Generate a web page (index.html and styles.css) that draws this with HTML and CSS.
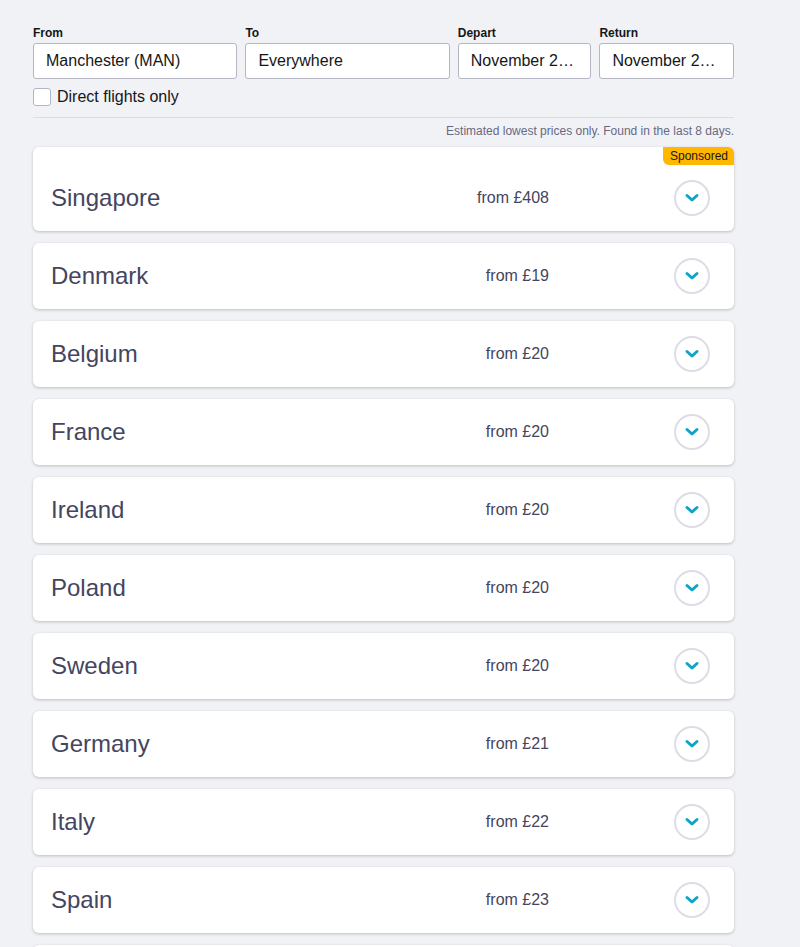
FILE: index.html
```html
<!DOCTYPE html>
<html lang="en">
<head>
<meta charset="utf-8">
<title>Everywhere</title>
<link rel="stylesheet" href="styles.css">
</head>
<body>
<div class="page">
  <form class="search">
    <div class="fields">
      <div class="field f-from"><label class="lbl">From</label><div class="input">Manchester (MAN)</div></div>
      <div class="field f-to"><label class="lbl">To</label><div class="input">Everywhere</div></div>
      <div class="field f-date"><label class="lbl">Depart</label><div class="input">November 2…</div></div>
      <div class="field f-date"><label class="lbl">Return</label><div class="input">November 2…</div></div>
    </div>
    <label class="direct"><span class="box"></span>Direct flights only</label>
  </form>
  <div class="divider"></div>
  <p class="note">Estimated lowest prices only. Found in the last 8 days.</p>
  <ul class="results">
    <li class="card sponsored">
      <div class="badge-row"><span class="badge">Sponsored</span></div>
      <div class="row"><span class="name">Singapore</span><span class="price">from £408</span><span class="chev"><svg viewBox="0 0 16 16" width="16" height="16"><path d="M3 5.5l5 4.5 5-4.5" fill="none" stroke="#0ca5c8" stroke-width="3" stroke-linecap="round" stroke-linejoin="round"/></svg></span></div>
    </li>
    <li class="card"><div class="row"><span class="name">Denmark</span><span class="price">from £19</span><span class="chev"><svg viewBox="0 0 16 16" width="16" height="16"><path d="M3 5.5l5 4.5 5-4.5" fill="none" stroke="#0ca5c8" stroke-width="3" stroke-linecap="round" stroke-linejoin="round"/></svg></span></div></li>
    <li class="card"><div class="row"><span class="name">Belgium</span><span class="price">from £20</span><span class="chev"><svg viewBox="0 0 16 16" width="16" height="16"><path d="M3 5.5l5 4.5 5-4.5" fill="none" stroke="#0ca5c8" stroke-width="3" stroke-linecap="round" stroke-linejoin="round"/></svg></span></div></li>
    <li class="card"><div class="row"><span class="name">France</span><span class="price">from £20</span><span class="chev"><svg viewBox="0 0 16 16" width="16" height="16"><path d="M3 5.5l5 4.5 5-4.5" fill="none" stroke="#0ca5c8" stroke-width="3" stroke-linecap="round" stroke-linejoin="round"/></svg></span></div></li>
    <li class="card"><div class="row"><span class="name">Ireland</span><span class="price">from £20</span><span class="chev"><svg viewBox="0 0 16 16" width="16" height="16"><path d="M3 5.5l5 4.5 5-4.5" fill="none" stroke="#0ca5c8" stroke-width="3" stroke-linecap="round" stroke-linejoin="round"/></svg></span></div></li>
    <li class="card"><div class="row"><span class="name">Poland</span><span class="price">from £20</span><span class="chev"><svg viewBox="0 0 16 16" width="16" height="16"><path d="M3 5.5l5 4.5 5-4.5" fill="none" stroke="#0ca5c8" stroke-width="3" stroke-linecap="round" stroke-linejoin="round"/></svg></span></div></li>
    <li class="card"><div class="row"><span class="name">Sweden</span><span class="price">from £20</span><span class="chev"><svg viewBox="0 0 16 16" width="16" height="16"><path d="M3 5.5l5 4.5 5-4.5" fill="none" stroke="#0ca5c8" stroke-width="3" stroke-linecap="round" stroke-linejoin="round"/></svg></span></div></li>
    <li class="card"><div class="row"><span class="name">Germany</span><span class="price">from £21</span><span class="chev"><svg viewBox="0 0 16 16" width="16" height="16"><path d="M3 5.5l5 4.5 5-4.5" fill="none" stroke="#0ca5c8" stroke-width="3" stroke-linecap="round" stroke-linejoin="round"/></svg></span></div></li>
    <li class="card"><div class="row"><span class="name">Italy</span><span class="price">from £22</span><span class="chev"><svg viewBox="0 0 16 16" width="16" height="16"><path d="M3 5.5l5 4.5 5-4.5" fill="none" stroke="#0ca5c8" stroke-width="3" stroke-linecap="round" stroke-linejoin="round"/></svg></span></div></li>
    <li class="card"><div class="row"><span class="name">Spain</span><span class="price">from £23</span><span class="chev"><svg viewBox="0 0 16 16" width="16" height="16"><path d="M3 5.5l5 4.5 5-4.5" fill="none" stroke="#0ca5c8" stroke-width="3" stroke-linecap="round" stroke-linejoin="round"/></svg></span></div></li>
    <li class="card"><div class="row"></div></li>
  </ul>
</div>
</body>
</html>
```

FILE: styles.css
```css
html, body {
  margin: 0;
  padding: 0;
  background: #f1f2f6;
  font-family: "Liberation Sans", Arial, sans-serif;
  color: #161616;
}
.page {
  width: 701px;
  margin-left: 33px;
  padding-top: 27px;
}
.search { margin: 0; }
.fields {
  display: flex;
  gap: 8px;
}
.field { display: flex; flex-direction: column; }
.f-from, .f-to { width: 205px; }
.f-date { width: 134px; }
.f-date:last-child { width: 135px; }
.lbl {
  font-size: 12px;
  font-weight: bold;
  line-height: 13px;
  height: 16px;
  color: #161616;
}
.input {
  box-sizing: border-box;
  height: 36px;
  border: 1px solid #b5b5c3;
  border-radius: 3px;
  background: #fff;
  padding: 0 12px;
  font-size: 16px;
  line-height: 34px;
  color: #161616;
  white-space: nowrap;
  overflow: hidden;
}
.direct {
  display: flex;
  align-items: center;
  gap: 6px;
  margin-top: 9px;
  font-size: 16px;
  color: #161616;
  height: 18px;
}
.box {
  box-sizing: border-box;
  width: 18px;
  height: 18px;
  border: 1px solid #b5b5c3;
  border-radius: 3px;
  background: #fff;
}
.divider {
  height: 1px;
  background: #dddde5;
  margin-top: 11px;
}
.note {
  margin: 6px 0 0;
  text-align: right;
  font-size: 12px;
  line-height: 14px;
  color: #68697f;
}
.results {
  list-style: none;
  margin: 9px 0 0;
  padding: 0;
  display: flex;
  flex-direction: column;
  gap: 12px;
}
.card {
  background: #fff;
  border-radius: 6px;
  box-shadow: 0 1px 3px rgba(37, 32, 31, 0.25);
  overflow: hidden;
}
.badge-row {
  display: flex;
  justify-content: flex-end;
  height: 18px;
}
.badge {
  background: #ffb700;
  color: #161616;
  font-size: 12px;
  line-height: 18px;
  padding: 0 6px 0 7px;
  border-bottom-left-radius: 6px;
}
.row {
  display: flex;
  align-items: center;
  height: 66px;
  padding: 0 24px 0 18px;
}
.name {
  flex: 1;
  font-size: 24px;
  color: #444560;
}
.price {
  font-size: 16px;
  color: #444560;
  text-align: right;
  margin-right: 125px;
}
.chev {
  box-sizing: border-box;
  width: 36px;
  height: 36px;
  border: 2px solid #dddde5;
  border-radius: 50%;
  display: flex;
  align-items: center;
  justify-content: center;
}
.chev svg { display: block; }
```
